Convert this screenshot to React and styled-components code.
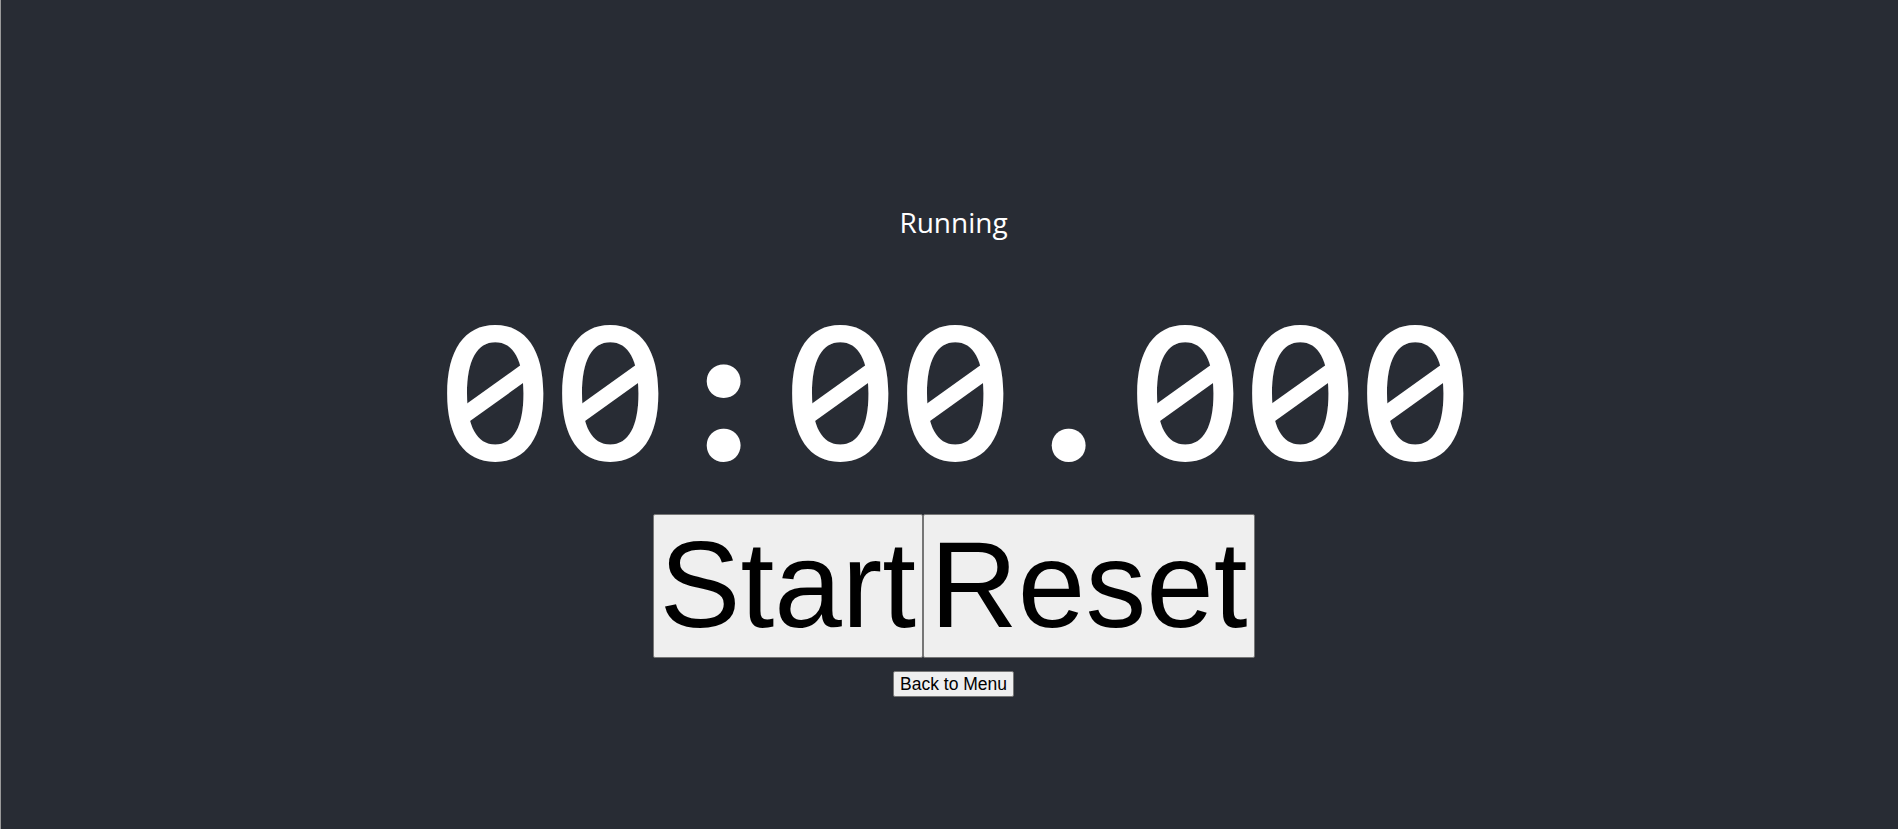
import React, { useState } from "react"
import styled, { createGlobalStyle } from "styled-components"

const GlobalStyle = createGlobalStyle`
  html, body {
    margin: 0;
    padding: 0;
    background: #282c34;
  }
  #root {
    min-height: 100vh;
  }
`

const Screen = styled.div`
  min-height: 829px;
  box-sizing: border-box;
  border-left: 1px solid #9a9a9a;
  background: #282c34;
  display: flex;
  flex-direction: column;
  align-items: center;
  padding: 202px 0 0 8px;
  color: #fff;
`

const Status = styled.div`
  font-family: "Open Sans", "Noto Sans", sans-serif;
  font-size: 28px;
  line-height: 40px;
`

const Clock = styled.div`
  display: flex;
  align-items: baseline;
  font-family: "Inter", "DejaVu Sans", sans-serif;
  font-size: 183px;
  font-weight: 500;
  font-feature-settings: "tnum" 1;
  line-height: 1;
  margin-top: 60px;
`

// each character sits in a fixed cell, as a monospaced face would;
// zeros get the slash of the reference face
const Cell = styled.span`
  position: relative;
  display: inline-block;
  width: 115px;
  height: 183px;
  text-align: center;
  font-weight: ${props => (props.punct ? 800 : 500)};

  ${props =>
    props.zero &&
    `
    &::after {
      content: "";
      position: absolute;
      left: 50%;
      top: 50%;
      width: 78px;
      height: 16px;
      background: #fff;
      transform: translate(-50%, -50%) rotate(-35.5deg);
    }
  `}
`

const ButtonRow = styled.div`
  display: flex;
  margin-top: 29px;
`

const Button = styled.button`
  font-family: "Liberation Sans", Arial, sans-serif;
  font-size: ${props => (props.big ? "121.5px" : "17.5px")};
  line-height: 1.15;
  padding: 1px 6px;
  background: #efefef;
  color: #000;
  border: 1px solid #767676;
  border-radius: 2px;
  cursor: pointer;
`

const BackButton = styled(Button)`
  margin-top: 13px;
  padding: 2px 6px;
`

export default function App() {
  const [running] = useState(true)
  const time = "00:00.000"
  return (
    <Screen>
      <GlobalStyle />
      <Status>{running ? "Running" : "Stopped"}</Status>
      <Clock>
        {time.split("").map((ch, i) => (
          <Cell key={i} zero={ch === "0"} punct={ch === ":" || ch === "."}>
            {ch}
          </Cell>
        ))}
      </Clock>
      <ButtonRow>
        <Button big>Start</Button>
        <Button big>Reset</Button>
      </ButtonRow>
      <BackButton>Back to Menu</BackButton>
    </Screen>
  )
}
